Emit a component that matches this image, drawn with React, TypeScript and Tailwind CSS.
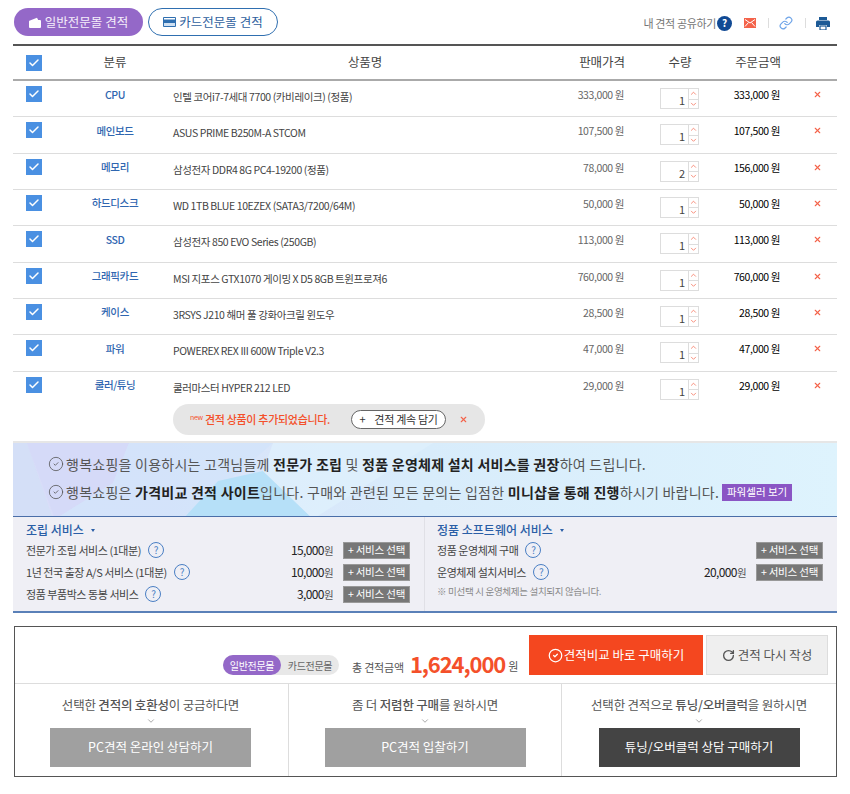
import React from "react";
import { Check, ChevronDown, ChevronUp, CircleCheck, Link, RotateCw, X } from "lucide-react";

const items = [
  { cat: "CPU", name: "인텔 코어i7-7세대 7700 (카비레이크) (정품)", price: "333,000", qty: 1, total: "333,000" },
  { cat: "메인보드", name: "ASUS PRIME B250M-A STCOM", price: "107,500", qty: 1, total: "107,500" },
  { cat: "메모리", name: "삼성전자 DDR4 8G PC4-19200 (정품)", price: "78,000", qty: 2, total: "156,000" },
  { cat: "하드디스크", name: "WD 1TB BLUE 10EZEX (SATA3/7200/64M)", price: "50,000", qty: 1, total: "50,000" },
  { cat: "SSD", name: "삼성전자 850 EVO Series (250GB)", price: "113,000", qty: 1, total: "113,000" },
  { cat: "그래픽카드", name: "MSI 지포스 GTX1070 게이밍 X D5 8GB 트윈프로져6", price: "760,000", qty: 1, total: "760,000" },
  { cat: "케이스", name: "3RSYS J210 해머 풀 강화아크릴 윈도우", price: "28,500", qty: 1, total: "28,500" },
  { cat: "파워", name: "POWEREX REX III 600W Triple V2.3", price: "47,000", qty: 1, total: "47,000" },
  { cat: "쿨러/튜닝", name: "쿨러마스터 HYPER 212 LED", price: "29,000", qty: 1, total: "29,000" },
];

const assembly = [
  { label: "전문가 조립 서비스 (1대분)", price: "15,000" },
  { label: "1년 전국 출장 A/S 서비스 (1대분)", price: "10,000" },
  { label: "정품 부품박스 동봉 서비스", price: "3,000" },
];

const CheckBox = () => (
  <span className="flex h-[16px] w-[16px] items-center justify-center bg-[#4a90e2]">
    <Check size={12} strokeWidth={3} className="text-white" />
  </span>
);

const Help = () => (
  <span className="ml-[7px] flex h-[16px] w-[16px] shrink-0 items-center justify-center rounded-full border border-[#4a7fc4] text-[10px] leading-none text-[#4a7fc4]">
    ?
  </span>
);

const SelectButton = () => (
  <span className="flex h-[17px] w-[67px] items-center justify-center border border-[#999] bg-[#777] text-[10.5px] tracking-[-0.2px] text-white">
    + 서비스 선택
  </span>
);

const Caret = () => (
  <span className="ml-[7px] h-0 w-0 border-x-[2.5px] border-t-[3px] border-x-transparent border-t-[#2a5ea6]" />
);

const ServiceRow = ({ label, price }: { label: string; price?: string }) => (
  <div className="flex h-[22px] items-center text-[11px] tracking-[-0.45px] text-[#444]">
    <span>{label}</span>
    <Help />
    <span className="ml-auto mr-[10px] text-[12px] tracking-[-0.6px] text-[#222]">
      {price}
      {price && <span className="text-[10.5px] text-[#555]">원</span>}
    </span>
    <SelectButton />
  </div>
);

const MailIcon = () => (
  <svg width="12" height="10" viewBox="0 0 12 10" className="ml-[12px]">
    <rect width="12" height="10" fill="#f4634a" />
    <path d="M1 1.5 6 5l5-3.5M1 8.5 4.5 4.5M11 8.5 7.5 4.5" fill="none" stroke="#fff" strokeWidth="1" />
  </svg>
);

const PrinterIcon = () => (
  <svg width="14" height="13" viewBox="0 0 14 13" className="ml-[10px]">
    <rect x="3" y="0" width="8" height="3" fill="#1c5a96" />
    <path d="M0 5a1.5 1.5 0 0 1 1.5-1.5h11A1.5 1.5 0 0 1 14 5v5h-3V8H3v2H0z" fill="#1c5a96" />
    <rect x="4" y="9" width="6" height="4" fill="none" stroke="#1c5a96" strokeWidth="1.2" />
  </svg>
);

export default function App() {
  return (
    <div className="h-[794px] w-[850px] overflow-hidden bg-white font-['Noto_Sans_CJK_KR','Noto_Sans',sans-serif]">
      <div className="mx-[13px] w-[824px]">
        <div className="flex h-[44px] items-start pt-[8px]">
          <span className="ml-px flex h-[28px] w-[129px] items-center justify-center gap-[4px] rounded-full bg-[#9468c8] text-[12.5px] text-[#f4eefa]">
            <svg width="12" height="11" viewBox="0 0 12 11">
              <path d="M1 3.5 8 .8l1.2 2.2H11a1 1 0 0 1 1 1v6a1 1 0 0 1-1 1H1a1 1 0 0 1-1-1V4.500a1 1 0 0 1 1-1z" fill="#fff" />
            </svg>
            일반전문몰 견적
          </span>
          <span className="ml-[5px] flex h-[28px] w-[130px] items-center justify-center gap-[3px] rounded-full border border-[#2f6fb0] text-[12.5px] text-[#2f5f9e]">
            <svg width="13" height="10" viewBox="0 0 13 10">
              <rect width="13" height="10" rx="1" fill="#2f6fb0" />
              <rect x="1" y="1" width="11" height="1.500" fill="#fff" />
              <rect x="1" y="6" width="11" height="3" fill="#cfe0f2" />
            </svg>
            카드전문몰 견적
          </span>
          <div className="ml-auto flex h-[28px] items-center pr-[7px] pt-[2px]">
            <span className="text-[11px] tracking-[-0.35px] text-[#777]">내 견적 공유하기</span>
            <span className="ml-[1px] flex h-[15px] w-[15px] items-center justify-center rounded-full bg-[#114a94] text-[10px] font-bold leading-none text-white">?</span>
            <MailIcon />
            <span className="ml-[12px] h-[10px] w-px bg-[#ddd]" />
            <Link size={14} strokeWidth={2} className="ml-[10px] text-[#6ea4e8]" />
            <span className="ml-[12px] h-[10px] w-px bg-[#ddd]" />
            <PrinterIcon />
          </div>
        </div>

        <div className="flex h-[37px] items-center border-t-2 border-b-2 border-t-[#555] border-b-[#aaa] text-[12.5px] tracking-[-0.1px] text-[#444]">
          <span className="w-[60px] pl-[13px] pt-[1px]"><CheckBox /></span>
          <span className="w-[84px] text-center">분류</span>
          <span className="w-[416px] text-center">상품명</span>
          <span className="w-[58px] text-center">판매가격</span>
          <span className="ml-[24px] w-[50px] text-center">수량</span>
          <span className="ml-[23px] w-[60px] text-center">주문금액</span>
        </div>

        {items.map((item, i) => (
          <div
            key={item.cat}
            className={`flex items-start text-[10.5px] ${i < items.length - 1 ? "h-[36.33px] border-b border-[#ddd]" : "h-[32.5px]"}`}
          >
            <span className="w-[60px] pl-[13px] pt-[5px]"><CheckBox /></span>
            <span className="w-[84px] pt-[5.5px] text-center font-medium tracking-[-0.4px] text-[#2f66b0]">{item.cat}</span>
            <span className="w-[16px]" />
            <span className="w-[400px] pt-[8px] tracking-[-0.4px] text-[#444]">{item.name}</span>
            <span className="w-[51px] pt-[6px] text-right tracking-[-0.4px] text-[#666]">{item.price} 원</span>
            <span className="ml-[36px] mt-[7px] flex h-[21px] w-[39px] border border-[#ddd]">
              <span className="flex-1 pr-[3px] text-right text-[11px] leading-[22px] text-[#444]">{item.qty}</span>
              <span className="flex w-[10px] flex-col border-l border-[#ddd]">
                <ChevronUp size={9} className="text-[#f4634a]" />
                <span className="mt-px border-t border-[#ddd]" />
                <ChevronDown size={9} className="text-[#f4634a]" />
              </span>
            </span>
            <span className="w-[81px] pt-[6px] text-right tracking-[-0.4px] text-black">{item.total} 원</span>
            <span className="ml-[33px] pt-[9px]"><X size={9} strokeWidth={3} className="text-[#f4634a]" /></span>
          </div>
        ))}

        <div className="flex h-[31px]">
          <div className="ml-[160px] flex h-[31px] w-[312px] items-center rounded-full bg-[#e6e6e6] pl-[17px] text-[11px] tracking-[-0.3px]">
            <span className="-mt-[4px] mr-[2px] text-[7px] text-[#f4502a]">new</span>
            <span className="font-medium text-[#f4502a]">견적 상품이 추가되었습니다.</span>
            <span className="ml-[21px] flex h-[19px] w-[95px] items-center justify-center gap-[9px] rounded-full border border-[#666] bg-white text-[#333]">
              <span>+</span>
              <span>견적 계속 담기</span>
            </span>
            <X size={9} strokeWidth={3} className="ml-[13px] text-[#f4634a]" />
          </div>
        </div>

        <div className="relative mt-[6px] h-[76px] overflow-hidden border-t-2 border-b-[1px] border-t-[#e6e6e6] border-b-[#4a6ea8] bg-gradient-to-r from-[#d9dcf8] via-[#d8ecfb] to-[#def3fd] text-[14px] tracking-[0.25px] text-[#555]">
          <svg className="absolute inset-0" width="824" height="76" aria-hidden="true">
            <polygon points="0,0 14,0 40,76 0,76" fill="#d2e0f7" opacity="0.7" />
            <polygon points="14,0 116,0 100,40 42,76" fill="#d5daf8" />
            <polygon points="116,0 260,0 170,76 42,76 100,40" fill="#d2e4fa" opacity="0.8" />
            <polygon points="170,76 205,38 250,28 300,76" fill="#b6e0f8" />
            <polygon points="260,0 420,0 300,76 250,28" fill="#dff0fc" opacity="0.8" />
          </svg>
          <div className="relative flex h-[34px] items-center pl-[35px] pt-[8px]">
            <CircleCheck size={16} strokeWidth={1.2} className="mr-[2px] text-[#555]" />
            <span>행복쇼핑을 이용하시는 고객님들께 <b className="font-bold text-[#222]">전문가 조립</b> 및 <b className="font-bold text-[#222]">정품 운영체제 설치 서비스를 권장</b>하여 드립니다.</span>
          </div>
          <div className="relative flex h-[30px] items-center pl-[35px]">
            <CircleCheck size={16} strokeWidth={1.2} className="mr-[2px] text-[#555]" />
            <span>행복쇼핑은 <b className="font-bold text-[#222]">가격비교 견적 사이트</b>입니다. 구매와 관련된 모든 문의는 입점한 <b className="font-bold text-[#222]">미니샵을 통해 진행</b>하시기 바랍니다.</span>
            <span className="ml-[3px] flex h-[17px] w-[70px] items-center justify-center bg-[#8a55c4] text-[10.5px] tracking-normal text-white">파워셀러 보기</span>
          </div>
        </div>

        <div className="flex h-[96px] border-b-2 border-[#5a80b8] bg-[#efeff5]">
          <div className="w-[412px] border-r border-[#e0e0e6] pl-[13px] pr-[14px] pt-[5px]">
            <div className="mb-[1px] flex h-[16px] items-center text-[12px] font-medium text-[#2a5ea6]">조립 서비스<Caret /></div>
            {assembly.map((s) => <ServiceRow key={s.label} label={s.label} price={s.price} />)}
          </div>
          <div className="flex-1 pl-[12px] pr-[14px] pt-[5px]">
            <div className="mb-[1px] flex h-[16px] items-center text-[12px] font-medium text-[#2a5ea6]">정품 소프트웨어 서비스<Caret /></div>
            <ServiceRow label="정품 운영체제 구매" />
            <ServiceRow label="운영체제 설치서비스" price="20,000" />
            <div className="mt-[1px] text-[9.5px] tracking-[-0.3px] text-[#888]">※ 미선택 시 운영체제는 설치되지 않습니다.</div>
          </div>
        </div>

        <div className="ml-px mt-[13px] h-[151px] w-[823px] border border-[#555]">
          <div className="flex h-[57px] items-start border-b border-[#ddd] pt-[8px]">
            <div className="ml-[208px] mt-[20px] flex h-[20px] w-[116px] items-center rounded-full bg-[#e8e8e8] text-[10px] tracking-[-0.3px]">
              <span className="flex h-[20px] w-[58px] items-center justify-center rounded-full bg-[#9468c8] text-white">일반전문몰</span>
              <span className="flex-1 text-center text-[#666]">카드전문몰</span>
            </div>
            <div className="ml-[13px] mt-[13px] flex h-[30px] w-[177px] items-center whitespace-nowrap text-[11px] text-[#555]">
              <span className="mt-[8px] tracking-[-0.2px]">총 견적금액</span>
              <span className="ml-[6px] text-[22px] font-bold tracking-[-1.1px] text-[#f4502a]">1,624,000</span>
              <span className="ml-[3px] mt-[6px]">원</span>
            </div>
            <span className="flex h-[40px] w-[174px] items-center justify-center bg-[#f4471f] text-[12.5px] text-white">
              <CircleCheck size={15} strokeWidth={2} className="mr-[1px]" />
              견적비교 바로 구매하기
            </span>
            <span className="ml-[3px] flex h-[40px] w-[122px] items-center justify-center border border-[#ddd] bg-[#efefef] text-[12.5px] text-[#555]">
              <RotateCw size={13} strokeWidth={2.5} className="mr-[3px]" />
              견적 다시 작성
            </span>
          </div>
          <div className="flex h-[92px]">
            <Cta width="w-[273px] pr-[2px]" title={<>선택한 <b className="font-medium">견적의 호환성</b>이 궁금하다면</>} label="PC견적 온라인 상담하기" />
            <Cta width="w-[273px]" title={<>좀 더 <b className="font-medium">저렴한 구매</b>를 원하시면</>} label="PC견적 입찰하기" border />
            <Cta width="flex-1" title={<>선택한 견적으로 <b className="font-medium">튜닝/오버클럭</b>을 원하시면</>} label="튜닝/오버클럭 상담 구매하기" dark border />
          </div>
        </div>
      </div>
    </div>
  );
}

function Cta({ width, title, label, dark, border }: { width: string; title: React.ReactNode; label: string; dark?: boolean; border?: boolean }) {
  return (
    <div className={`flex ${width} flex-col items-center pt-[12px] ${border ? "border-l border-[#ddd]" : ""}`}>
      <div className="h-[18px] text-[12.5px] leading-[18px] tracking-[-0.2px] text-[#555]">{title}</div>
      <ChevronDown size={10} strokeWidth={2} className="mt-[2px] text-[#999]" />
      <span className={`mt-[2px] flex h-[39px] w-[201px] items-center justify-center text-[12.5px] ${dark ? "bg-[#444] text-white" : "bg-[#a0a0a0] text-white"}`}>{label}</span>
    </div>
  );
}
